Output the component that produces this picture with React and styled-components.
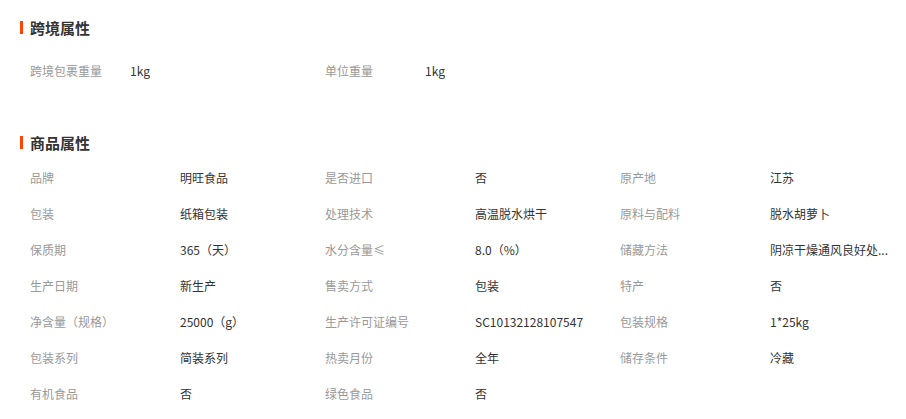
import styled, { createGlobalStyle } from "styled-components";

const GlobalStyle = createGlobalStyle`
  body {
    margin: 0;
    background: #fff;
    font-family: "Noto Sans CJK SC", "Noto Sans", sans-serif;
    color: #333;
  }
`;

const Page = styled.div`
  padding: 17px 0 0 20px;
`;

const Section = styled.section`
  margin-bottom: ${(p) => p.$gap || 0}px;
`;

const Title = styled.h3`
  display: flex;
  align-items: center;
  margin: 0;
  height: 20px;
  font-size: 15px;
  font-weight: 700;
  color: #333;

  &::before {
    content: "";
    width: 3px;
    height: 13px;
    background: #ff4400;
    margin-right: 7px;
  }
`;

const Grid = styled.div`
  display: grid;
  grid-template-columns: repeat(3, 295px);
  padding-left: 10px;
  margin-top: ${(p) => p.$top}px;
`;

const Item = styled.div`
  display: flex;
  align-items: center;
  height: 36px;
  font-size: 12px;
`;

const Label = styled.span`
  width: ${(p) => p.$w}px;
  flex-shrink: 0;
  color: #999;
`;

const Value = styled.span`
  max-width: 140px;
  color: #333;
  white-space: nowrap;
  overflow: hidden;
  text-overflow: ellipsis;
`;

const crossBorder = [
  ["跨境包裹重量", "1kg"],
  ["单位重量", "1kg"],
];

const product = [
  ["品牌", "明旺食品"],
  ["是否进口", "否"],
  ["原产地", "江苏"],
  ["包装", "纸箱包装"],
  ["处理技术", "高温脱水烘干"],
  ["原料与配料", "脱水胡萝卜"],
  ["保质期", "365（天）"],
  ["水分含量≤", "8.0（%）"],
  ["储藏方法", "阴凉干燥通风良好处..."],
  ["生产日期", "新生产"],
  ["售卖方式", "包装"],
  ["特产", "否"],
  ["净含量（规格）", "25000（g）"],
  ["生产许可证编号", "SC10132128107547"],
  ["包装规格", "1*25kg"],
  ["包装系列", "简装系列"],
  ["热卖月份", "全年"],
  ["储存条件", "冷藏"],
  ["有机食品", "否"],
  ["绿色食品", "否"],
];

function AttrGrid({ items, labelWidth, top }) {
  return (
    <Grid $top={top}>
      {items.map(([label, value]) => (
        <Item key={label}>
          <Label $w={labelWidth}>{label}</Label>
          <Value>{value}</Value>
        </Item>
      ))}
    </Grid>
  );
}

export default function App() {
  return (
    <>
      <GlobalStyle />
      <Page>
        <Section $gap={44}>
          <Title>跨境属性</Title>
          <AttrGrid items={crossBorder} labelWidth={100} top={15} />
        </Section>
        <Section>
          <Title>商品属性</Title>
          <AttrGrid items={product} labelWidth={150} top={7} />
        </Section>
      </Page>
    </>
  );
}
